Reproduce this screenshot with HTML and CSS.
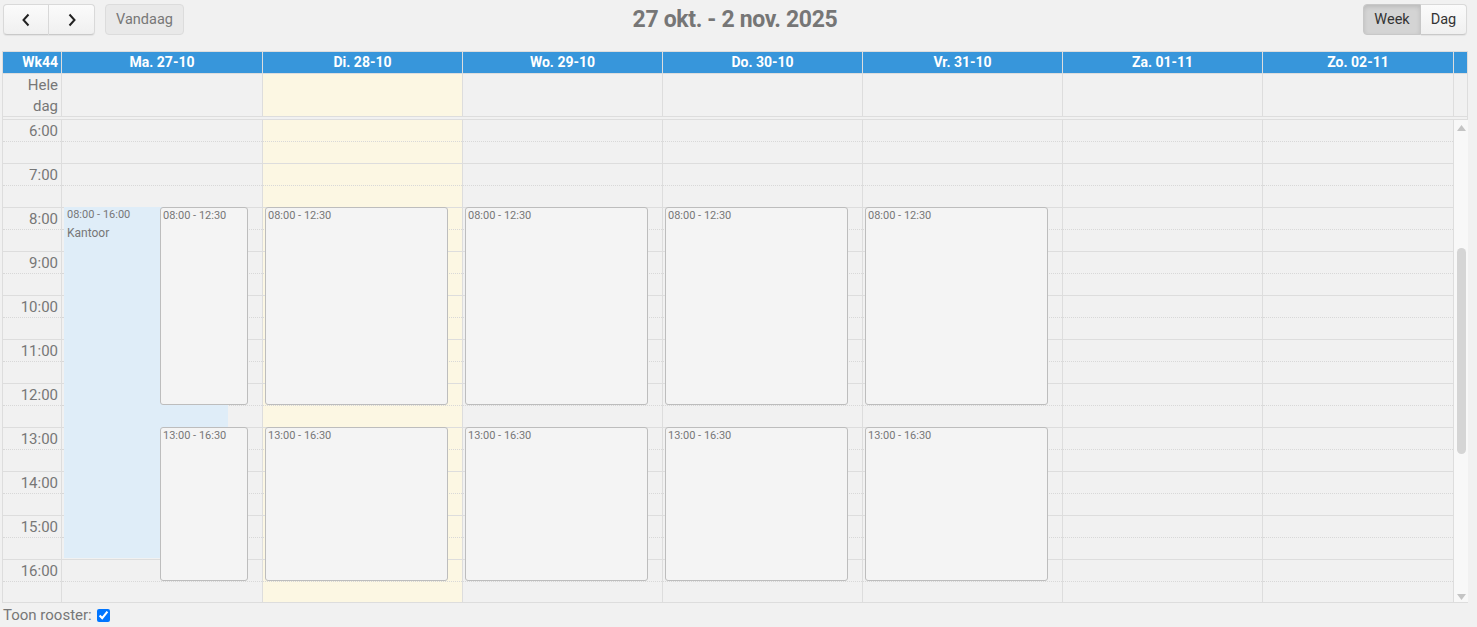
FILE: index.html
```html
<!DOCTYPE html>
<html lang="nl">
<head>
<meta charset="utf-8">
<title>Rooster</title>
<link rel="stylesheet" href="styles.css">
</head>
<body>
<div class="toolbar">
  <div class="tb-left">
    <div class="btn-group">
      <button class="btn btn-icon" aria-label="Vorige"><svg width="10" height="14" viewBox="0 0 10 14"><polyline points="7.5,1.5 2.5,7 7.5,12.5" fill="none" stroke="#222" stroke-width="2"/></svg></button>
      <button class="btn btn-icon" aria-label="Volgende"><svg width="10" height="14" viewBox="0 0 10 14"><polyline points="2.5,1.5 7.5,7 2.5,12.5" fill="none" stroke="#222" stroke-width="2"/></svg></button>
    </div>
    <button class="btn btn-disabled">Vandaag</button>
  </div>
  <h2 class="title">27 okt. - 2 nov. 2025</h2>
  <div class="tb-right">
    <div class="btn-group">
      <button class="btn btn-active">Week</button>
      <button class="btn">Dag</button>
    </div>
  </div>
</div>

<div class="cal">
  <div class="head row">
    <div class="hc axis-h">Wk44</div>
    <div class="hc">Ma. 27-10</div>
    <div class="hc">Di. 28-10</div>
    <div class="hc">Wo. 29-10</div>
    <div class="hc">Do. 30-10</div>
    <div class="hc">Vr. 31-10</div>
    <div class="hc">Za. 01-11</div>
    <div class="hc">Zo. 02-11</div>
    <div class="hc gutter"></div>
  </div>
  <div class="allday row">
    <div class="ac axis-a">Hele<br>dag</div>
    <div class="ac"></div>
    <div class="ac today"></div>
    <div class="ac"></div>
    <div class="ac"></div>
    <div class="ac"></div>
    <div class="ac"></div>
    <div class="ac"></div>
    <div class="ac gutter"></div>
  </div>
  <div class="divider"></div>
  <div class="body row">
    <div class="col axis">
      <div class="s"><span>6:00</span></div><div class="s"></div>
      <div class="s"><span>7:00</span></div><div class="s"></div>
      <div class="s"><span>8:00</span></div><div class="s"></div>
      <div class="s"><span>9:00</span></div><div class="s"></div>
      <div class="s"><span>10:00</span></div><div class="s"></div>
      <div class="s"><span>11:00</span></div><div class="s"></div>
      <div class="s"><span>12:00</span></div><div class="s"></div>
      <div class="s"><span>13:00</span></div><div class="s"></div>
      <div class="s"><span>14:00</span></div><div class="s"></div>
      <div class="s"><span>15:00</span></div><div class="s"></div>
      <div class="s"><span>16:00</span></div><div class="s"></div>
    </div>
    <div class="col day">
      <div class="s"></div><div class="s"></div><div class="s"></div><div class="s"></div><div class="s"></div><div class="s"></div><div class="s"></div><div class="s"></div><div class="s"></div><div class="s"></div><div class="s"></div><div class="s"></div><div class="s"></div><div class="s"></div><div class="s"></div><div class="s"></div><div class="s"></div><div class="s"></div><div class="s"></div><div class="s"></div><div class="s"></div><div class="s"></div>
      <div class="bg-ev"><div class="ev-time">08:00 - 16:00</div><div class="ev-title">Kantoor</div></div>
      <div class="ev ev-narrow ev-am"><div class="ev-time">08:00 - 12:30</div></div>
      <div class="ev ev-narrow ev-pm"><div class="ev-time">13:00 - 16:30</div></div>
    </div>
    <div class="col day today">
      <div class="s"></div><div class="s"></div><div class="s"></div><div class="s"></div><div class="s"></div><div class="s"></div><div class="s"></div><div class="s"></div><div class="s"></div><div class="s"></div><div class="s"></div><div class="s"></div><div class="s"></div><div class="s"></div><div class="s"></div><div class="s"></div><div class="s"></div><div class="s"></div><div class="s"></div><div class="s"></div><div class="s"></div><div class="s"></div>
      <div class="ev ev-am"><div class="ev-time">08:00 - 12:30</div></div>
      <div class="ev ev-pm"><div class="ev-time">13:00 - 16:30</div></div>
    </div>
    <div class="col day">
      <div class="s"></div><div class="s"></div><div class="s"></div><div class="s"></div><div class="s"></div><div class="s"></div><div class="s"></div><div class="s"></div><div class="s"></div><div class="s"></div><div class="s"></div><div class="s"></div><div class="s"></div><div class="s"></div><div class="s"></div><div class="s"></div><div class="s"></div><div class="s"></div><div class="s"></div><div class="s"></div><div class="s"></div><div class="s"></div>
      <div class="ev ev-am"><div class="ev-time">08:00 - 12:30</div></div>
      <div class="ev ev-pm"><div class="ev-time">13:00 - 16:30</div></div>
    </div>
    <div class="col day">
      <div class="s"></div><div class="s"></div><div class="s"></div><div class="s"></div><div class="s"></div><div class="s"></div><div class="s"></div><div class="s"></div><div class="s"></div><div class="s"></div><div class="s"></div><div class="s"></div><div class="s"></div><div class="s"></div><div class="s"></div><div class="s"></div><div class="s"></div><div class="s"></div><div class="s"></div><div class="s"></div><div class="s"></div><div class="s"></div>
      <div class="ev ev-am"><div class="ev-time">08:00 - 12:30</div></div>
      <div class="ev ev-pm"><div class="ev-time">13:00 - 16:30</div></div>
    </div>
    <div class="col day">
      <div class="s"></div><div class="s"></div><div class="s"></div><div class="s"></div><div class="s"></div><div class="s"></div><div class="s"></div><div class="s"></div><div class="s"></div><div class="s"></div><div class="s"></div><div class="s"></div><div class="s"></div><div class="s"></div><div class="s"></div><div class="s"></div><div class="s"></div><div class="s"></div><div class="s"></div><div class="s"></div><div class="s"></div><div class="s"></div>
      <div class="ev ev-am"><div class="ev-time">08:00 - 12:30</div></div>
      <div class="ev ev-pm"><div class="ev-time">13:00 - 16:30</div></div>
    </div>
    <div class="col day">
      <div class="s"></div><div class="s"></div><div class="s"></div><div class="s"></div><div class="s"></div><div class="s"></div><div class="s"></div><div class="s"></div><div class="s"></div><div class="s"></div><div class="s"></div><div class="s"></div><div class="s"></div><div class="s"></div><div class="s"></div><div class="s"></div><div class="s"></div><div class="s"></div><div class="s"></div><div class="s"></div><div class="s"></div><div class="s"></div>
    </div>
    <div class="col day">
      <div class="s"></div><div class="s"></div><div class="s"></div><div class="s"></div><div class="s"></div><div class="s"></div><div class="s"></div><div class="s"></div><div class="s"></div><div class="s"></div><div class="s"></div><div class="s"></div><div class="s"></div><div class="s"></div><div class="s"></div><div class="s"></div><div class="s"></div><div class="s"></div><div class="s"></div><div class="s"></div><div class="s"></div><div class="s"></div>
    </div>
    <div class="scrollbar">
      <svg class="arrow-up" width="9" height="6" viewBox="0 0 9 6"><polygon points="4.5,0 9,6 0,6" fill="#c4c4c4"/></svg>
      <div class="thumb"></div>
      <svg class="arrow-down" width="9" height="6" viewBox="0 0 9 6"><polygon points="0,0 9,0 4.5,6" fill="#c4c4c4"/></svg>
    </div>
  </div>
</div>

<div class="footer">
  <label class="toggle">Toon rooster: <input type="checkbox" checked></label>
</div>
</body>
</html>
```
FILE: styles.css
```css
* { box-sizing: border-box; }

html, body {
  margin: 0;
  padding: 0;
  background: #f1f1f1;
  font-family: Roboto, "Liberation Sans", Arial, sans-serif;
  color: #777;
}

.toolbar {
  display: grid;
  grid-template-columns: 1fr auto 1fr;
  align-items: center;
  padding: 4px 10px 0 3px;
  height: 35px;
  margin-bottom: 16px;
}

.tb-left { display: flex; align-items: center; gap: 10px; }
.tb-right { display: flex; justify-content: flex-end; }

.btn-group { display: flex; }

.btn {
  height: 31px;
  padding: 0 9px;
  font-family: inherit;
  font-size: 14.5px;
  color: #333;
  background: linear-gradient(#fbfbfb, #f0f0f0);
  border: 1px solid #d9d9d9;
  border-bottom-color: #c9c9c9;
  box-shadow: 0 1px 1px rgba(0, 0, 0, 0.06);
  border-radius: 4px;
  line-height: 29px;
  cursor: pointer;
}

.btn-group .btn { border-radius: 0; }
.btn-group .btn:first-child { border-top-left-radius: 4px; border-bottom-left-radius: 4px; }
.btn-group .btn:last-child { border-top-right-radius: 4px; border-bottom-right-radius: 4px; border-left: none; }

.btn-icon {
  width: 46px;
  display: flex;
  align-items: center;
  justify-content: center;
  padding: 0;
}

.btn-disabled {
  width: 79px;
  background: #e9e9e9;
  color: #777;
  border-color: #dcdcdc;
  box-shadow: none;
  padding: 0;
}

.btn-active {
  width: 58px;
  padding: 0;
  background: #d4d4d4;
  box-shadow: inset 0 2px 4px rgba(0, 0, 0, 0.12);
  border-color: #c8c8c8;
}

.tb-right .btn:last-child { width: 46px; padding: 0; }

.title {
  margin: 0;
  font-size: 23px;
  font-weight: 700;
  letter-spacing: -0.35px;
  color: #767676;
  line-height: 31px;
}

.cal {
  margin-left: 2px;
  width: 1466px;
}

.row {
  display: grid;
  grid-template-columns: 59px 201px repeat(5, 200px) 191px 13px;
  border-left: 1px solid #ddd;
  border-right: 1px solid #ddd;
}

.head {
  border-top: 1px solid #ddd;
  border-bottom: 1px solid #ddd;
  background: #3796db;
}

.hc {
  height: 21px;
  line-height: 21px;
  text-align: center;
  font-size: 14px;
  font-weight: 700;
  color: #fff;
  border-right: 1px solid #ddd;
}

.hc.axis-h { text-align: right; padding-right: 3px; }
.hc.gutter { border-right: none; }

.allday { border-bottom: 1px solid #ddd; }

.ac {
  height: 42px;
  border-right: 1px solid #ddd;
}

.ac.axis-a {
  text-align: right;
  padding: 1px 3px 0 0;
  font-size: 15px;
  line-height: 21px;
}

.ac.gutter { border-right: none; }
.today { background: #fcf7e3; }

.divider {
  height: 3px;
  border-left: 1px solid #ddd;
  border-right: 1px solid #ddd;
  border-bottom: 1px solid #ddd;
}

.body {
  grid-template-columns: 59px 201px repeat(5, 200px) 191px 14px;
  border-right: none;
  border-bottom: 1px solid #ddd;
  height: 483px;
  overflow: hidden;
}

.col {
  position: relative;
  border-right: 1px solid #ddd;
}

.s {
  height: 22px;
  border-bottom: 1px dotted #d8d8d8;
}

.s:nth-child(even) { border-bottom: 1px solid #ddd; }

.axis .s {
  text-align: right;
  padding: 1px 3px 0 0;
  font-size: 15px;
  line-height: 21px;
  color: #777;
}

.bg-ev {
  position: absolute;
  left: 2px;
  top: 87px;
  width: 164px;
  height: 351px;
  background: #dfedf8;
  padding: 1px 3px;
}

.ev {
  position: absolute;
  left: 2px;
  width: 183px;
  background: #f4f4f4;
  border: 1px solid #bdbdbd;
  border-radius: 3px;
  padding: 1px 2px;
}

.ev-narrow { left: 98px; width: 88px; }
.ev-am { top: 87px; height: 198px; }
.ev-pm { top: 307px; height: 154px; }

.ev-time {
  font-size: 11px;
  line-height: 13px;
  color: #777;
}

.ev-title {
  font-size: 12px;
  line-height: 17px;
  margin-top: 4px;
  color: #777;
}

.scrollbar {
  display: flex;
  flex-direction: column;
  align-items: center;
  background: #f8f8f8;
  padding: 5px 0 4px;
}

.arrow-up, .arrow-down { display: block; flex: none; }

.thumb {
  width: 9px;
  height: 206px;
  margin-top: 117px;
  background: #d5d5d5;
  border-radius: 5px;
}

.arrow-down { margin-top: auto; }

.footer {
  padding: 0 0 0 3px;
  height: 24px;
}

.toggle {
  font-size: 15px;
  line-height: 24px;
  color: #777;
  display: inline-flex;
  align-items: center;
}

.toggle input {
  width: 13px;
  height: 13px;
  margin: 0 0 0 5px;
}
```
